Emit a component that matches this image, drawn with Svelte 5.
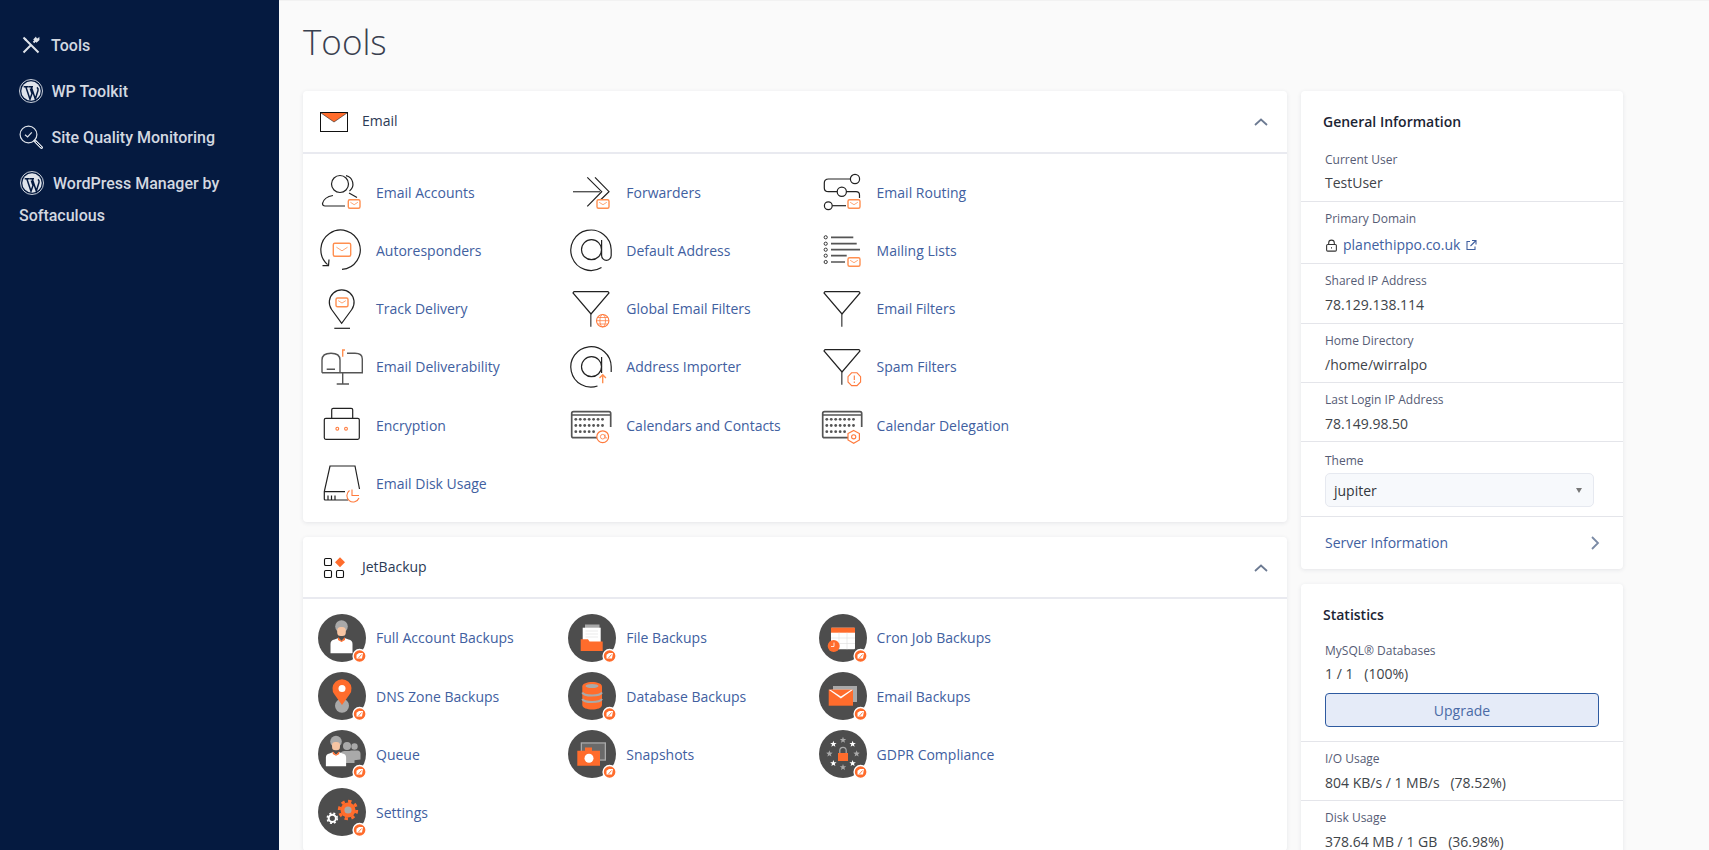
<script>
	const emailItems = [
		{ label: 'Email Accounts', icon: iconAccounts },
		{ label: 'Forwarders', icon: iconForwarders },
		{ label: 'Email Routing', icon: iconRouting },
		{ label: 'Autoresponders', icon: iconAutoresponders },
		{ label: 'Default Address', icon: iconDefaultAddress },
		{ label: 'Mailing Lists', icon: iconLists },
		{ label: 'Track Delivery', icon: iconTrack },
		{ label: 'Global Email Filters', icon: iconGlobalFilters },
		{ label: 'Email Filters', icon: iconFilters },
		{ label: 'Email Deliverability', icon: iconDeliverability },
		{ label: 'Address Importer', icon: iconImporter },
		{ label: 'Spam Filters', icon: iconSpam },
		{ label: 'Encryption', icon: iconEncryption },
		{ label: 'Calendars and Contacts', icon: iconCalendars },
		{ label: 'Calendar Delegation', icon: iconDelegation },
		{ label: 'Email Disk Usage', icon: iconDisk }
	];

	const backupItems = [
		{ label: 'Full Account Backups', icon: jbAccount },
		{ label: 'File Backups', icon: jbFile },
		{ label: 'Cron Job Backups', icon: jbCron },
		{ label: 'DNS Zone Backups', icon: jbDns },
		{ label: 'Database Backups', icon: jbDatabase },
		{ label: 'Email Backups', icon: jbEmail },
		{ label: 'Queue', icon: jbQueue },
		{ label: 'Snapshots', icon: jbSnapshots },
		{ label: 'GDPR Compliance', icon: jbGdpr },
		{ label: 'Settings', icon: jbSettings }
	];

	const infoRows = [
		{ label: 'Shared IP Address', value: '78.129.138.114', cls: 'ip' },
		{ label: 'Home Directory', value: '/home/wirralpo', cls: '' },
		{ label: 'Last Login IP Address', value: '78.149.98.50', cls: '' }
	];

	const dots = [];
	for (let r = 0; r < 3; r++) {
		for (let c = 0; c < (r === 2 ? 5 : 7); c++) {
			dots.push({ x: 8.8 + c * 4.45, y: 18.3 + r * 6.2 });
		}
	}

	const gdprStars = [0, 1, 2, 3, 4, 5, 6, 7].map((i) => {
		const a = (i * Math.PI) / 4;
		return { x: 24 + 13.6 * Math.sin(a), y: 23.7 - 13.6 * Math.cos(a), grey: i % 2 === 0 };
	});

	function starPoints(cx, cy, r) {
		const pts = [];
		for (let i = 0; i < 10; i++) {
			const a = (i * Math.PI) / 5;
			const d = i % 2 === 0 ? r : r * 0.42;
			pts.push(`${(cx + d * Math.sin(a)).toFixed(2)},${(cy - d * Math.cos(a)).toFixed(2)}`);
		}
		return pts.join(' ');
	}
</script>

{#snippet mail(x, y, w, h)}
	<rect class="or-soft" x={x} y={y} width={w} height={h} rx="1.5" />
	<path class="or-soft thin" d="M{x + w * 0.18} {y + h * 0.3}L{x + w / 2} {y + h * 0.58}L{x + w * 0.82} {y + h * 0.3}" />
{/snippet}

{#snippet funnel()}
	<path class="ln" d="M7 6.7H41L42 8L24 29L6 8ZM23.8 29" />
	<path class="ln grey" d="M23.8 29V41.7" />
{/snippet}

{#snippet calendar()}
	<path class="ln grey thick" d="M30 36.7H6.5Q4.7 36.7 4.7 35V12.5Q4.7 10.7 6.5 10.7H42Q43.7 10.7 43.7 12.5V26" />
	<path class="ln grey" d="M4.7 14H43.7" />
	{#each dots as d}
		<circle class="dot" cx={d.x} cy={d.y} r="1.4" />
	{/each}
{/snippet}

{#snippet iconAccounts()}
	<circle class="ln" cx="23" cy="16" r="8.5" />
	<path class="ln" d="M29 7.6A8.7 8.7 0 0 1 32.5 23M32 25L40 29.5" />
	<path class="ln" d="M28 38H8Q5.5 38 5.5 35.5Q7 29 16 27.5" />
	{@render mail(31.3, 31.7, 11.7, 8.6)}
{/snippet}

{#snippet iconForwarders()}
	<path class="ln grey" d="M6 23.7H33" />
	<path class="ln" d="M20.3 9.3L34.7 23.7L20.3 38.3M28 9.3L42 23.7L33.7 31.7" />
	{@render mail(30, 31.7, 12, 8.6)}
{/snippet}

{#snippet iconRouting()}
	<circle class="ln" cx="37" cy="11" r="4.6" />
	<path class="ln" d="M32.4 11H10.5Q6.3 11 6.3 15V20Q6.3 23.7 10.5 23.7H19.2" />
	<circle class="ln" cx="23.8" cy="23.7" r="4.6" />
	<path class="ln" d="M28.4 23.7H38Q41.5 23.7 41.5 27V30" />
	<circle class="ln" cx="10.3" cy="37.7" r="3.9" />
	<path class="ln" d="M14.2 37.7H28" />
	{@render mail(30, 31.7, 12, 8.6)}
{/snippet}

{#snippet iconAutoresponders()}
	<path class="ln" d="M25 43.4A19.7 19.7 0 1 0 10.6 38.6" />
	<path class="ln" d="M5.5 39.7H11.5L12 33.5" />
	{@render mail(16.3, 17.3, 17.4, 13)}
{/snippet}

{#snippet iconDefaultAddress()}
	<circle class="ln" cx="24.5" cy="23.7" r="10" />
	<path class="ln" d="M34.6 14V29.5A4.7 4.7 0 0 0 44.2 29.5V23.7A20.2 20.2 0 1 0 34.5 41.5" />
{/snippet}

{#snippet iconLists()}
	<circle class="bul" cx="7.7" cy="11.3" r="1.6" />
	<circle class="bul" cx="7.7" cy="17.7" r="1.6" />
	<circle class="bul" cx="7.7" cy="23.7" r="1.6" />
	<circle class="bul" cx="7.7" cy="29.7" r="1.6" />
	<circle class="bul" cx="7.7" cy="36" r="1.6" />
	<path class="ln grey thick" d="M13 11.3H35.3M13 17.7H38.7M13 23.7H42M13 29.7H28.7M13 36H27" />
	{@render mail(30, 31.7, 12, 8.6)}
{/snippet}

{#snippet iconTrack()}
	<path class="ln" d="M24.7 38.3L14.6 24.5A12.4 12.4 0 1 1 34.8 24.5Z" />
	<path class="ln" d="M17.3 43.3H33" />
	{@render mail(19, 13, 12, 8.7)}
{/snippet}

{#snippet iconGlobalFilters()}
	{@render funnel()}
	<circle class="or" cx="35.7" cy="35.7" r="6.2" />
	<ellipse class="or thin" cx="35.7" cy="35.7" rx="2.8" ry="6.2" />
	<path class="or thin" d="M29.5 35.7H41.9M30.5 32.5H40.9M30.5 39H40.9" />
{/snippet}

{#snippet iconFilters()}
	{@render funnel()}
{/snippet}

{#snippet iconDeliverability()}
	<path class="ln grey" d="M5 29.7H45.3V16Q45.3 10.3 38 10.3H30M18 29.7H23V17Q23 10.3 14 10.3Q5 10.3 5 17V29.7M9.7 26.3H18M25.7 29.7V41M19.7 41H32" />
	<path class="or-soft" d="M25.7 13.7V7H28" />
{/snippet}

{#snippet iconEncryption()}
	<rect class="ln" x="7.3" y="17.3" width="35" height="21" rx="1.5" />
	<path class="ln" d="M14.7 17.3V8.8Q14.7 7.3 16.2 7.3H34.2Q35.7 7.3 35.7 8.8V17.3" />
	<circle class="or" cx="20.3" cy="27.7" r="1.4" />
	<circle class="or" cx="29" cy="27.7" r="1.4" />
{/snippet}

{#snippet iconDisk()}
	<path class="ln" d="M31 41H8.5Q7.3 41 7.3 40V32.5L13 7H38L42.5 30" />
	<path class="ln" d="M7.3 32.7H28M11 36.5V41M14.5 36.5V41M18 36.5V41" />
	<path class="or" d="M35 30.5V36.5H42M32.5 31.5A6.3 6.3 0 1 0 42 39" />
{/snippet}

{#snippet iconImporter()}
	<circle class="ln" cx="24.5" cy="23.7" r="10" />
	<path class="ln" d="M34.6 14V30M44.2 29V23.7A20.2 20.2 0 1 0 30.5 43" />
	<path class="or-soft" d="M35.7 40.3V32M32.5 35L35.7 31.8L38.9 35" />
{/snippet}

{#snippet iconSpam()}
	{@render funnel()}
	<path class="or" d="M33.6 29.8H39L42.6 33.6V39L39 42.6H33.6L30 39V33.6Z" />
	<path class="or" d="M36.3 32.5V37M36.3 38.4V40" />
{/snippet}

{#snippet iconCalendars()}
	{@render calendar()}
	<circle class="or-ring" cx="35.7" cy="35.7" r="5.9" />
	<circle class="or thin" cx="35.7" cy="35.7" r="2.3" />
	<path class="or thin" d="M38 33.5V36.5Q39 38 40 36.5" />
{/snippet}

{#snippet iconDelegation()}
	{@render calendar()}
	<path class="or-ring" d="M35.7 29.4L41.4 32.6V39L35.7 42.2L30 39V32.6Z" />
	<circle class="or" cx="35.7" cy="35.8" r="2.1" />
{/snippet}

{#snippet jbBadge()}
	<circle class="badge" cx="41.6" cy="42" r="6.5" />
	<path class="badge-mark" d="M38.5 40.8L41 39H45L44 44.5H38.5Z" />
	<path class="badge-cut" d="M40.5 44L43.5 40.5" />
{/snippet}

{#snippet person(x, s)}
	<g transform="translate({x} 0) scale({s})">
		<circle class="fill-grey" cx="0" cy="12.5" r="6.3" />
		<rect class="fill-peach" x="-4.3" y="13" width="8.6" height="9" rx="3.5" />
		<path class="fill-white" d="M-11 39.3V30Q-11 26 -7 25.5L-3 24L0 27L3 24L7 25.5Q11 26 11 30V39.3Z" />
		<path class="fill-orange" d="M-3.5 23L0 27L3.5 23L3.5 26L0 28L-3.5 26Z" />
	</g>
{/snippet}

{#snippet jbAccount()}
	<circle class="disc" cx="24" cy="24" r="24" />
	{@render person(23.5, 1)}
	{@render jbBadge()}
{/snippet}

{#snippet jbDns()}
	<circle class="disc" cx="24" cy="24" r="24" />
	<circle class="fill-grey" cx="24" cy="33.7" r="7" />
	<path class="fill-orange" d="M24 33L16.5 22.5A9.5 9.5 0 1 1 31.5 22.5Z" />
	<circle class="fill-white" cx="24" cy="16.5" r="3.5" />
	{@render jbBadge()}
{/snippet}

{#snippet jbQueue()}
	<circle class="disc" cx="24" cy="24" r="24" />
	<circle class="fill-grey" cx="36.5" cy="16.5" r="3.2" />
	<path class="fill-grey" d="M30 31V24Q30 21 33 20.5H40Q42.5 21 42.5 24V29.5Z" />
	<circle class="fill-grey" cx="29" cy="16" r="4" />
	<path class="fill-grey" d="M22 33V25Q22 21.5 26 21H33Q36.5 21.5 36.5 25V33Z" />
	<g transform="translate(-5.5 0)">
		{@render person(23.5, 0.92)}
	</g>
	{@render jbBadge()}
{/snippet}

{#snippet jbSettings()}
	<circle class="disc" cx="24" cy="24" r="24" />
	<circle class="gear-o" cx="30" cy="22" r="7.5" />
	<circle class="gear-teeth-o" cx="30" cy="22" r="8.7" />
	<circle class="fill-grey" cx="30" cy="22" r="3.6" />
	<circle class="gear-w" cx="14.3" cy="30.3" r="3.6" />
	<circle class="gear-teeth-w" cx="14.3" cy="30.3" r="5" />
	{@render jbBadge()}
{/snippet}

{#snippet jbFile()}
	<circle class="disc" cx="24" cy="24" r="24" />
	<rect class="fill-grey" x="17" y="10.5" width="14.5" height="6" />
	<rect class="fill-white" x="14.7" y="13.7" width="18" height="16" />
	<path class="rule" d="M17.5 17H30M17.5 20H30M17.5 23H30" />
	<path class="fill-orange" d="M12.7 37V25.3H20L21.5 27.5H34.7V37Z" />
	{@render jbBadge()}
{/snippet}

{#snippet jbDatabase()}
	<circle class="disc" cx="24" cy="24" r="24" />
	<path class="fill-orange" d="M14.3 14.5C14.3 8.5 34 8.5 34 14.5V33C34 39 14.3 39 14.3 33Z" />
	<ellipse class="fill-grey" cx="24" cy="14" rx="6.5" ry="2" />
	<path class="band" d="M14.3 20.5C16 24.5 32 24.5 34 20.5M14.3 27C16 31 32 31 34 27" />
	{@render jbBadge()}
{/snippet}

{#snippet jbSnapshots()}
	<circle class="disc" cx="24" cy="24" r="24" />
	<rect class="fill-grey" x="12.7" y="12.3" width="25.3" height="18.4" />
	<rect class="screen" x="14" y="13.6" width="22.7" height="15.8" />
	<path class="fill-orange" d="M9.3 35.7V20.7H17V17.5H24V20.7H32V35.7Z" />
	<circle class="fill-white" cx="21" cy="28.3" r="4.5" />
	{@render jbBadge()}
{/snippet}

{#snippet jbCron()}
	<circle class="disc" cx="24" cy="24" r="24" />
	<rect class="fill-white" x="12" y="13.7" width="24" height="21.6" rx="1" />
	<rect class="fill-orange" x="12" y="13.7" width="24" height="5" />
	<path class="rule" d="M12 24H36M12 29.5H36M20 18.7V35.3M28 18.7V35.3" />
	<circle class="fill-orange" cx="14.7" cy="32" r="6" />
	<path class="clock" d="M15 28.5V32.5H12" />
	{@render jbBadge()}
{/snippet}

{#snippet jbEmail()}
	<circle class="disc" cx="24" cy="24" r="24" />
	<rect class="fill-grey" x="14" y="14" width="24" height="16" />
	<rect class="fill-orange" x="9.7" y="17.7" width="24.3" height="16" />
	<path class="fill-white" d="M9.7 17.7H34L21.85 26.5Z" />
	<path class="fill-orange" d="M11.5 17.7H32.2L21.85 24.6Z" />
	{@render jbBadge()}
{/snippet}

{#snippet jbGdpr()}
	<circle class="disc" cx="24" cy="24" r="24" />
	{#each gdprStars as s}
		<polygon class={s.grey ? 'fill-grey' : 'fill-white'} points={starPoints(s.x, s.y, 3.4)} />
	{/each}
	<path class="shackle" d="M20.8 23V20.5A3.2 3.2 0 0 1 27.2 20.5V23" />
	<rect class="fill-orange" x="19" y="23" width="10" height="8" />
	{@render jbBadge()}
{/snippet}

{#snippet wpLogo()}
	<svg class="side-icon" viewBox="0 0 24 24" aria-hidden="true">
		<circle cx="12" cy="12" r="11.5" fill="none" stroke="#dfe3ea" stroke-width="0.9" />
		<circle cx="12" cy="12" r="9.7" fill="#dfe3ea" />
		<path d="M4.7 7.8H9.2M6.8 7.8L11 20.3L13 14.6L11.3 9.6M9.4 7.8H14M12.2 7.8L16.3 20L19 11.5Q19.6 9.5 17.9 8.4" fill="none" stroke="#051a40" stroke-width="1.5" />
	</svg>
{/snippet}

<div class="page">
	<aside class="sidebar">
		<a class="side-link" href="#tools">
			<svg class="side-icon" viewBox="0 0 24 24" aria-hidden="true">
				<path d="M6 6L19.5 19.5M18.5 5.5L14.5 9.5M12 12L4.5 19.5" fill="none" stroke="#dfe3ea" stroke-width="2" />
				<path d="M3.8 5.2L5.2 3.8L8 6.6L6.6 8Z" fill="#dfe3ea" />
				<path d="M20.3 3.8L20.5 7L17.5 9.8L14.2 6.5L17 3.6L17.8 6.2Z" fill="#dfe3ea" />
			</svg>
			Tools
		</a>
		<a class="side-link" href="#wp">
			{@render wpLogo()}
			WP Toolkit
		</a>
		<a class="side-link" href="#quality">
			<svg class="side-icon" viewBox="0 0 24 24" aria-hidden="true">
				<circle cx="9.5" cy="9.5" r="8.4" fill="none" stroke="#dfe3ea" stroke-width="1.2" />
				<path d="M6 9.7L8.6 12L12.8 7.4" fill="none" stroke="#dfe3ea" stroke-width="1.2" />
				<path d="M15.8 15.8L22.5 22.5" fill="none" stroke="#dfe3ea" stroke-width="3" stroke-linecap="round" />
				<path d="M17 17L22.2 22.2" fill="none" stroke="#051a40" stroke-width="1" stroke-linecap="round" />
			</svg>
			Site Quality Monitoring
		</a>
		<a class="side-link wide" href="#softaculous">
			{@render wpLogo()}
			WordPress Manager by Softaculous
		</a>
	</aside>

	<main class="main">
		<h1>Tools</h1>
		<div class="columns">
			<div class="groups">
				<section class="card">
					<header class="group-head">
						<svg class="head-icon" viewBox="0 0 36 24" aria-hidden="true">
							<rect x="2.5" y="3.5" width="27" height="19" fill="#fff" stroke="#111" stroke-width="1" />
							<path d="M3 4H29L16 13Z" fill="#ff6c2c" />
							<path d="M3 4L16 13L29 4" fill="none" stroke="#222" stroke-width="0.6" />
						</svg>
						<span>Email</span>
						<svg class="fold" viewBox="0 0 14 8" aria-hidden="true">
							<path d="M1 7L7 1.5L13 7" />
						</svg>
					</header>
					<div class="grid">
						{#each emailItems as item}
							<a class="tool" href="#item">
								<svg class="tool-icon" viewBox="0 0 48 48" aria-hidden="true">
									{@render item.icon()}
								</svg>
								{item.label}
							</a>
						{/each}
					</div>
				</section>

				<section class="card">
					<header class="group-head">
						<svg class="head-icon" viewBox="0 0 36 24" aria-hidden="true">
							<rect x="6.5" y="3.5" width="7" height="7" rx="1.3" fill="none" stroke="#111" stroke-width="1.1" />
							<rect x="6.5" y="15.5" width="7" height="7" rx="1.3" fill="none" stroke="#111" stroke-width="1.1" />
							<rect x="18.5" y="15.5" width="7" height="7" rx="1.3" fill="none" stroke="#111" stroke-width="1.1" />
							<path d="M22 2.3L27 7.3L22 12.3L17 7.3Z" fill="#ff6c2c" />
						</svg>
						<span>JetBackup</span>
						<svg class="fold" viewBox="0 0 14 8" aria-hidden="true">
							<path d="M1 7L7 1.5L13 7" />
						</svg>
					</header>
					<div class="grid jet">
						{#each backupItems as item}
							<a class="tool" href="#item">
								<svg class="tool-icon" viewBox="0 0 48 48" aria-hidden="true">
									{@render item.icon()}
								</svg>
								{item.label}
							</a>
						{/each}
					</div>
				</section>
			</div>

			<div class="stats-col">
				<section class="card info">
					<h2>General Information</h2>
					<div class="row first">
						<div class="label">Current User</div>
						<div class="value">TestUser</div>
					</div>
					<div class="row domain">
						<div class="label">Primary Domain</div>
						<div class="value link">
							<svg class="lock" viewBox="0 0 12 12" aria-hidden="true">
								<rect x="1.5" y="5" width="9" height="6.2" rx="1" />
								<path d="M3.4 5V3.6A2.6 2.6 0 0 1 8.6 3.6V5M6 7.5V8.8" />
							</svg>
							planethippo.co.uk
							<svg class="ext" viewBox="0 0 12 12" aria-hidden="true">
								<path d="M5 2.5H2V10.5H10V7.5M7 1.5H11V5.5M11 1.5L5.5 7" />
							</svg>
						</div>
					</div>
					{#each infoRows as row}
						<div class="row {row.cls}">
							<div class="label">{row.label}</div>
							<div class="value">{row.value}</div>
						</div>
					{/each}
					<div class="row theme">
						<div class="label">Theme</div>
						<div class="select">
							jupiter
							<span class="caret"></span>
						</div>
					</div>
					<a class="server" href="#server">
						Server Information
						<svg viewBox="0 0 10 16" aria-hidden="true">
							<path d="M2 2L8 8L2 14" />
						</svg>
					</a>
				</section>

				<section class="card info">
					<h2>Statistics</h2>
					<div class="row mysql">
						<div class="label">MySQL® Databases</div>
						<div class="value">1 / 1 &nbsp; (100%)</div>
						<button class="upgrade">Upgrade</button>
					</div>
					<div class="row">
						<div class="label">I/O Usage</div>
						<div class="value">804 KB/s / 1 MB/s &nbsp; (78.52%)</div>
					</div>
					<div class="row">
						<div class="label">Disk Usage</div>
						<div class="value">378.64 MB / 1 GB &nbsp; (36.98%)</div>
					</div>
				</section>
			</div>
		</div>
	</main>
</div>

<style>
	:global(body) {
		margin: 0;
		overflow: hidden;
		background: #fafafa;
	}

	a {
		text-decoration: none;
	}

	.page {
		display: flex;
		height: 850px;
		overflow: hidden;
		font-family: 'Open Sans', sans-serif;
	}

	.sidebar {
		width: 279px;
		flex: none;
		box-sizing: border-box;
		padding: 30px 19px 0;
		background: #051a40;
	}

	.side-link {
		display: block;
		font-family: Roboto, sans-serif;
		font-size: 16px;
		font-weight: 500;
		line-height: 32px;
		margin-bottom: 14px;
		color: #d3d8e0;
	}

	.side-icon {
		width: 24px;
		height: 24px;
		margin-right: 4.5px;
		vertical-align: -6px;
	}

	.wide .side-icon {
		margin-left: 1px;
		margin-right: 5px;
	}

	.main {
		flex: 1;
		padding: 0 24px;
		border-top: 1px solid #f2f2f2;
	}

	h1 {
		margin: 15px 0 0;
		font-size: 35px;
		font-weight: 300;
		line-height: 52px;
		color: #39404f;
	}

	.columns {
		display: flex;
		gap: 14px;
		margin-top: 23px;
		width: 1320px;
	}

	.groups {
		width: 984px;
		flex: none;
		display: flex;
		flex-direction: column;
		gap: 15px;
	}

	.stats-col {
		width: 322px;
		flex: none;
		display: flex;
		flex-direction: column;
		gap: 15px;
	}

	.card {
		background: #fff;
		border-radius: 4px;
		box-shadow: 0 1px 4px rgba(40, 50, 80, 0.1);
	}

	.group-head {
		display: flex;
		align-items: center;
		height: 60.5px;
		padding-left: 15px;
		border-bottom: 2px solid #e9eaf0;
		font-size: 14px;
		color: #2c3a55;
	}

	.head-icon {
		width: 36px;
		height: 24px;
		margin-right: 8px;
		flex: none;
	}

	.group-head span {
		flex: 1;
		margin-top: -1px;
	}

	.fold {
		width: 14px;
		height: 8px;
		margin-right: 19px;
		margin-top: 2px;
		fill: none;
		stroke: #6c7a92;
		stroke-width: 1.8;
	}

	.grid {
		display: grid;
		grid-template-columns: repeat(3, 250.3px);
		grid-auto-rows: 58.2px;
		padding: 9.7px 0 9.3px 14px;
	}

	.tool {
		display: flex;
		align-items: center;
		gap: 11px;
		font-size: 14px;
		color: #41609f;
	}

	.tool-icon {
		width: 48px;
		height: 48px;
		flex: none;
		overflow: visible;
		fill: none;
	}

	.jet .tool-icon {
		margin-left: 1px;
		margin-right: -1px;
	}

	.ln {
		fill: none;
		stroke: #222;
		stroke-width: 1.2;
	}

	.ln.grey {
		stroke: #555;
		stroke-width: 1.4;
	}

	.ln.thick {
		stroke-width: 1.7;
	}

	.or {
		fill: none;
		stroke: #ff7a3c;
		stroke-width: 1.1;
	}

	.or-ring {
		fill: #fff;
		stroke: #ff7a3c;
		stroke-width: 1.2;
	}

	.or-soft {
		fill: #fff;
		stroke: #ff8f50;
		stroke-width: 1.4;
	}

	path.or-soft {
		fill: none;
	}

	.thin {
		stroke-width: 0.8;
	}

	.dot {
		fill: #555;
	}

	.bul {
		fill: #fff;
		stroke: #222;
		stroke-width: 0.9;
	}

	.disc {
		fill: #4d4d4d;
	}

	.fill-grey {
		fill: #a9a9a9;
	}

	.fill-white {
		fill: #fff;
	}

	.fill-orange {
		fill: #ff6c2c;
	}

	.fill-peach {
		fill: #f7c5a3;
	}

	.badge {
		fill: #ff6c2c;
		stroke: #fff;
		stroke-width: 1.4;
	}

	.badge-mark {
		fill: #fff;
	}

	.badge-cut {
		fill: none;
		stroke: #ff6c2c;
		stroke-width: 0.9;
	}

	.rule {
		fill: none;
		stroke: #dedede;
		stroke-width: 0.6;
	}

	.clock {
		fill: none;
		stroke: #fff;
		stroke-width: 0.8;
	}

	.band {
		fill: none;
		stroke: #a9a9a9;
		stroke-width: 2;
	}

	.screen {
		fill: #6a6a6a;
	}

	.shackle {
		fill: none;
		stroke: #a9a9a9;
		stroke-width: 1.2;
	}

	.gear-o {
		fill: #ff6c2c;
	}

	.gear-teeth-o {
		fill: none;
		stroke: #ff6c2c;
		stroke-width: 3;
		stroke-dasharray: 3.4 3.4;
	}

	.gear-w {
		fill: #4d4d4d;
		stroke: #fff;
		stroke-width: 2;
	}

	.gear-teeth-w {
		fill: none;
		stroke: #fff;
		stroke-width: 1.6;
		stroke-dasharray: 2 2;
	}

	.info {
		overflow: hidden;
	}

	h2 {
		margin: 0;
		padding: 20px 22px 0;
		font-size: 14px;
		font-weight: 600;
		line-height: 22px;
		color: #1b2433;
	}

	.row {
		padding: 8px 24px 0;
		height: 50px;
		border-bottom: 1px solid #e4e5ea;
	}

	.row:last-child {
		border-bottom: none;
	}

	.first {
		padding-top: 18px;
	}

	.first .value,
	.mysql .value {
		margin-top: 4px;
	}

	.domain {
		height: 53px;
	}

	.ip {
		height: 51px;
	}

	.theme {
		padding-top: 10px;
		height: 64px;
	}

	.mysql {
		padding-top: 16px;
		height: 99px;
	}

	.label {
		font-size: 12px;
		line-height: 18px;
		color: #565c75;
	}

	.value {
		margin-top: 5px;
		font-size: 14px;
		line-height: 20px;
		color: #404449;
	}

	.value.link {
		display: flex;
		align-items: center;
		gap: 5px;
		margin-top: 7px;
		color: #41609f;
	}

	.lock {
		width: 13px;
		height: 13px;
		fill: none;
		stroke: #333;
		stroke-width: 1;
	}

	.ext {
		width: 12px;
		height: 12px;
		fill: none;
		stroke: #41609f;
		stroke-width: 1.1;
	}

	.select {
		display: flex;
		align-items: center;
		justify-content: space-between;
		box-sizing: border-box;
		width: 269px;
		height: 34px;
		margin-top: 3px;
		padding: 0 11px 0 8px;
		border: 1px solid #e6e9f0;
		border-radius: 5px;
		background: #f7f9fc;
		font-size: 14px;
		color: #33373d;
	}

	.caret {
		width: 0;
		height: 0;
		border-left: 3.5px solid transparent;
		border-right: 3.5px solid transparent;
		border-top: 5px solid #777;
	}

	.server {
		display: flex;
		align-items: center;
		justify-content: space-between;
		box-sizing: border-box;
		height: 52px;
		padding: 0 23px 1px 24px;
		font-size: 14px;
		color: #41609f;
	}

	.server svg {
		width: 10px;
		height: 16px;
		fill: none;
		stroke: #7a8aa5;
		stroke-width: 1.8;
	}

	.upgrade {
		display: block;
		box-sizing: border-box;
		width: 274px;
		height: 34px;
		margin-top: 9px;
		border: 1px solid #2e5aa0;
		border-radius: 4px;
		background: #e5ebf8;
		font-family: 'Open Sans', sans-serif;
		font-size: 14px;
		color: #4a6aa6;
	}
</style>
